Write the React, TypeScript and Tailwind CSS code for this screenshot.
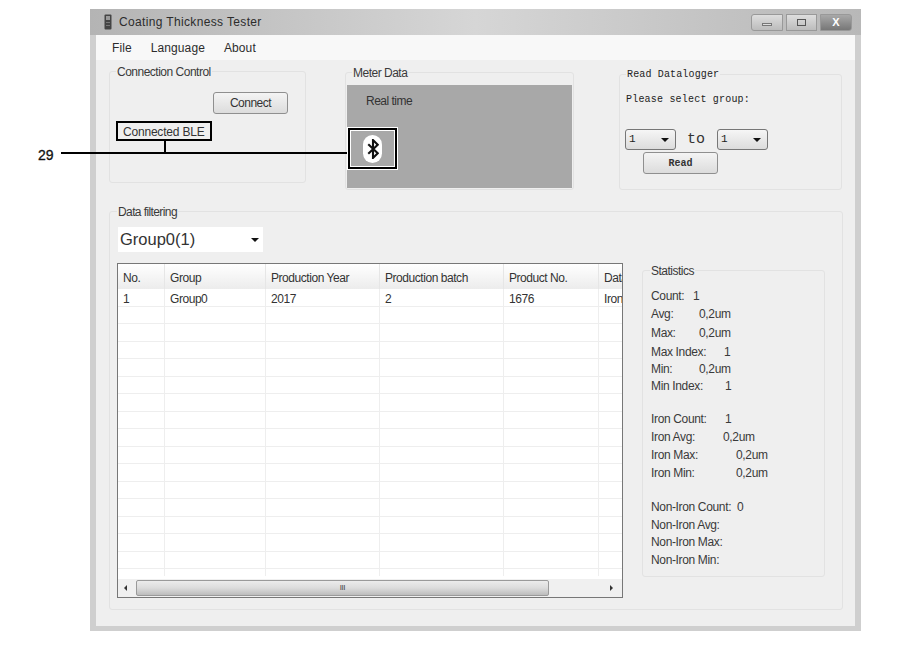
import type { ReactNode } from 'react'

const font = "font-['Liberation_Sans',sans-serif]"
const mono = "font-['Liberation_Mono',monospace]"

const columns = [
  { label: 'No.', value: '1', width: 'w-[47px]' },
  { label: 'Group', value: 'Group0', width: 'w-[101px]' },
  { label: 'Production Year', value: '2017', width: 'w-[114px]' },
  { label: 'Production batch', value: '2', width: 'w-[124px]' },
  { label: 'Product No.', value: '1676', width: 'w-[95px]' },
  { label: 'Data', value: 'Iron', width: 'w-[23px]' },
]

const stats = [
  { label: 'Count:', value: '1', width: 'w-[42px]', height: 'h-[18px]' },
  { label: 'Avg:', value: '0,2um', width: 'w-[48px]', height: 'h-[17px]' },
  { label: 'Max:', value: '0,2um', width: 'w-[48px]', height: 'h-[21px]' },
  { label: 'Max Index:', value: '1', width: 'w-[73px]', height: 'h-[17px]' },
  { label: 'Min:', value: '0,2um', width: 'w-[48px]', height: 'h-[17px]' },
  { label: 'Min Index:', value: '1', width: 'w-[74px]', height: 'h-[18px]' },
  { label: '', value: '', width: 'w-0', height: 'h-[15px]' },
  { label: 'Iron Count:', value: '1', width: 'w-[74px]', height: 'h-[18px]' },
  { label: 'Iron Avg:', value: '0,2um', width: 'w-[72px]', height: 'h-[17px]' },
  { label: 'Iron Max:', value: '0,2um', width: 'w-[85px]', height: 'h-[19px]' },
  { label: 'Iron Min:', value: '0,2um', width: 'w-[85px]', height: 'h-[17px]' },
  { label: '', value: '', width: 'w-0', height: 'h-[17px]' },
  { label: 'Non-Iron Count:', value: '0', width: 'w-[86px]', height: 'h-[18px]' },
  { label: 'Non-Iron Avg:', value: '', width: 'w-[86px]', height: 'h-[17px]' },
  { label: 'Non-Iron Max:', value: '', width: 'w-[86px]', height: 'h-[18px]' },
  { label: 'Non-Iron Min:', value: '', width: 'w-[86px]', height: 'h-[18px]' },
]

const GroupBox = ({ title, className, titleClass = '', children }: { title: string; className: string; titleClass?: string; children?: ReactNode }) => (
  <div className={`relative rounded-[3px] border border-[#e2e2e2] ${className}`}>
    <span className={`absolute left-[6px] -top-[7px] bg-[#efefef] px-[1px] text-[12px] leading-[14px] tracking-[-0.5px] text-[#3a3a3a] ${titleClass}`}>{title}</span>
    {children}
  </div>
)

const Triangle = () => <span className="h-0 w-0 border-x-[4px] border-t-[4px] border-x-transparent border-t-[#111]" />

const SmallSelect = ({ className = '' }: { className?: string }) => (
  <div className={`flex h-[21px] w-[51px] items-center justify-between rounded-[3px] border border-[#777] bg-gradient-to-b from-[#f6f6f6] to-[#dcdcdc] pl-[3px] pr-[6px] text-[11px] text-[#222] ${className}`}>
    <span>1</span>
    <Triangle />
  </div>
)

const TitleButton = ({ className, children }: { className: string; children: ReactNode }) => (
  <div className={`flex h-[17px] items-center justify-center border border-[#999] ${className}`}>{children}</div>
)

export default function App() {
  return (
    <div className={`relative h-[650px] w-[907px] overflow-hidden bg-white pl-[90px] pt-[9px] ${font}`}>
      <div className="flex h-[622px] w-[771px] flex-col bg-[#cfcfcf] px-[6px] pb-[5px]">
        {/* title bar */}
        <div className="-mx-[6px] flex h-[26px] shrink-0 items-center bg-gradient-to-r from-[#b4b4b4] via-[#d6d6d6] to-[#b8b8b8] pl-[14px] pr-[9px]">
          <svg width="8" height="16" viewBox="0 0 8 16" className="mr-[7px]">
            <rect x="0.5" y="0.5" width="7" height="15" rx="1" fill="#444" />
            <path d="M2 2h4v4H2z" fill="#999" />
            <path d="M2 8h4v1H2zM2 11h4v1H2z" fill="#777" />
          </svg>
          <span className="text-[12px] tracking-[0.35px] text-[#2c2c2c]">Coating Thickness Tester</span>
          <div className="ml-auto flex gap-[3px]">
            <TitleButton className="w-[32px] rounded-l-[3px] bg-gradient-to-b from-[#dedede] to-[#bcbcbc]">
              <span className="mt-[5px] h-[3px] w-[10px] border border-[#777] bg-[#ddd]" />
            </TitleButton>
            <TitleButton className="w-[31px] bg-gradient-to-b from-[#dedede] to-[#bcbcbc]">
              <span className="h-[7px] w-[9px] border border-[#555]" />
            </TitleButton>
            <TitleButton className="w-[32px] rounded-r-[3px] bg-gradient-to-b from-[#a9a9a9] to-[#777] text-[11px] font-bold text-white">
              X
            </TitleButton>
          </div>
        </div>

        {/* menu */}
        <div className="flex h-[25px] shrink-0 items-center gap-[19px] bg-[#f8f8f8] pl-[16px] text-[12px] tracking-[0.1px] text-[#2c2c2c]">
          <span>File</span>
          <span>Language</span>
          <span>About</span>
        </div>

        <div className="flex min-h-0 flex-1 flex-col bg-[#efefef] pl-[13px] pt-[11px]">
          {/* top groups */}
          <div className="flex h-[130px] items-start">
            <GroupBox title="Connection Control" className="flex h-[112px] w-[197px] flex-col pl-[13px] pt-[20px]">
              <div className="ml-[90px] flex h-[22px] w-[75px] items-center justify-center rounded-[3px] border border-[#8f8f8f] bg-gradient-to-b from-[#f4f4f4] to-[#dcdcdc] text-[12px] tracking-[-0.5px] text-[#333]">
                Connect
              </div>
              <span className="mt-[9px] text-[12px] tracking-[-0.2px] text-[#333]">Connected BLE</span>
            </GroupBox>
            <GroupBox title="Meter Data" className="ml-[39px] mt-[1px] h-[118px] w-[229px] pl-[1px] pt-[12px]">
              <div className="h-[103px] w-[225px] bg-[#a8a8a8] pl-[19px] pt-[9px] text-[12px] leading-[14px] tracking-[-0.5px] text-[#333]">
                Real time
                <div className="-ml-[3px] mt-[27px] flex h-[28px] w-[19px] items-center justify-center rounded-full bg-white">
                  <svg width="12" height="20" viewBox="0 0 11 19" fill="none" stroke="#111" strokeWidth="2">
                    <path d="M1 5l9 8.5-4.5 4.5V1L10 5.5 1 14" />
                  </svg>
                </div>
              </div>
            </GroupBox>
            <GroupBox
              title="Read Datalogger"
              titleClass={`${mono} !text-[10px] !tracking-[0.15px] !text-[#222]`}
              className={`ml-[45px] mt-[3px] h-[116px] w-[223px] pl-[6px] pt-[19px] ${mono}`}
            >
              <p className="text-[10px] leading-[12px] tracking-[0.2px] text-[#222]">Please select group:</p>
              <div className="mt-[23px] flex items-center">
                <SmallSelect className="-ml-[1px]" />
                <span className="ml-[11px] w-[30px] text-[15px] leading-none text-[#333]">to</span>
                <SmallSelect />
              </div>
              <div className="ml-[17px] mt-[2px] flex h-[22px] w-[75px] items-center justify-center rounded-[3px] border border-[#8f8f8f] bg-gradient-to-b from-[#f4f4f4] to-[#dcdcdc] text-[10px] font-bold text-[#333]">
                Read
              </div>
            </GroupBox>
          </div>

          {/* data filtering */}
          <GroupBox title="Data filtering" titleClass="left-[7px] tracking-[-0.6px]" className="mt-[10px] h-[399px] w-[734px] pl-[7px] pt-[15px]">
            <div className="ml-[1px] flex h-[25px] w-[145px] items-center justify-between bg-white pl-[2px] pr-[4px] text-[16.5px] text-[#333]">
              <span>Group0(1)</span>
              <Triangle />
            </div>
            <div className="mt-[11px] flex items-start">
              {/* table */}
              <div className="relative flex h-[335px] w-[506px] shrink-0 flex-col overflow-hidden border border-[#777] bg-white text-[12px] tracking-[-0.45px] text-[#333]">
                <div className="flex h-[25px] shrink-0 bg-gradient-to-b from-white to-[#ececec]">
                  {columns.map((column) => (
                    <div key={column.label} className={`${column.width} shrink-0 overflow-hidden whitespace-nowrap border-r border-[#e6e6e6] pl-[5px] pt-[5px] last:border-r-0`}>
                      {column.label}
                    </div>
                  ))}
                </div>
                {Array.from({ length: 17 }).map((_, row) => (
                  <div key={row} className="flex h-[17.5px] shrink-0 border-b border-[#eeeeee]">
                    {columns.map((column) => (
                      <div key={column.label} className={`${column.width} shrink-0 overflow-hidden whitespace-nowrap border-r border-[#eeeeee] pl-[5px] leading-[20px] last:border-r-0`}>
                        {row === 0 ? column.value : ''}
                      </div>
                    ))}
                  </div>
                ))}
                {/* scrollbar */}
                <div className="absolute bottom-0 left-0 flex h-[21px] w-full items-end bg-white text-[#444]">
                  <div className="flex h-[18px] w-full items-center bg-[#f0f0f0]">
                    <span className="ml-[6px] h-0 w-0 border-y-[3px] border-r-[3px] border-y-transparent border-r-[#333]" />
                    <div className="ml-[9px] flex h-[16px] w-[413px] items-center justify-center rounded-[2px] border border-[#9a9a9a] bg-gradient-to-b from-[#ececec] via-[#dcdcdc] to-[#bcbcbc] text-[8px] leading-none">
                      III
                    </div>
                    <span className="ml-auto mr-[9px] h-0 w-0 border-y-[3px] border-l-[3px] border-y-transparent border-l-[#333]" />
                  </div>
                </div>
              </div>

              {/* statistics */}
              <GroupBox title="Statistics" titleClass="left-[7px]" className="ml-[19px] mt-[7px] h-[307px] w-[183px] pl-[8px] pt-[16px] text-[12px] tracking-[-0.35px] text-[#3a3a3a]">
                {stats.map((stat, index) => (
                  <div key={index} className={`flex items-center ${stat.height}`}>
                    <span className={`${stat.width} shrink-0 whitespace-nowrap`}>{stat.label}</span>
                    <span>{stat.value}</span>
                  </div>
                ))}
              </GroupBox>
            </div>
          </GroupBox>
        </div>
      </div>

      {/* callout 29 */}
      <span className="absolute left-[38px] top-[147px] text-[14px] font-normal leading-[16px] text-[#111] [-webkit-text-stroke:0.3px_#111]">29</span>
      <div className="absolute left-[61px] top-[152px] h-[2px] w-[287px] bg-black" />
      <div className="absolute left-[164px] top-[140px] h-[13px] w-[2px] bg-black" />
      <div className="absolute left-[116px] top-[121px] h-[20px] w-[96px] border-2 border-black" />
      <div className="absolute left-[348px] top-[128px] h-[41px] w-[49px] border-2 border-black shadow-[0_0_0_1px_#fff,inset_0_0_0_1px_#fff]" />
    </div>
  )
}
